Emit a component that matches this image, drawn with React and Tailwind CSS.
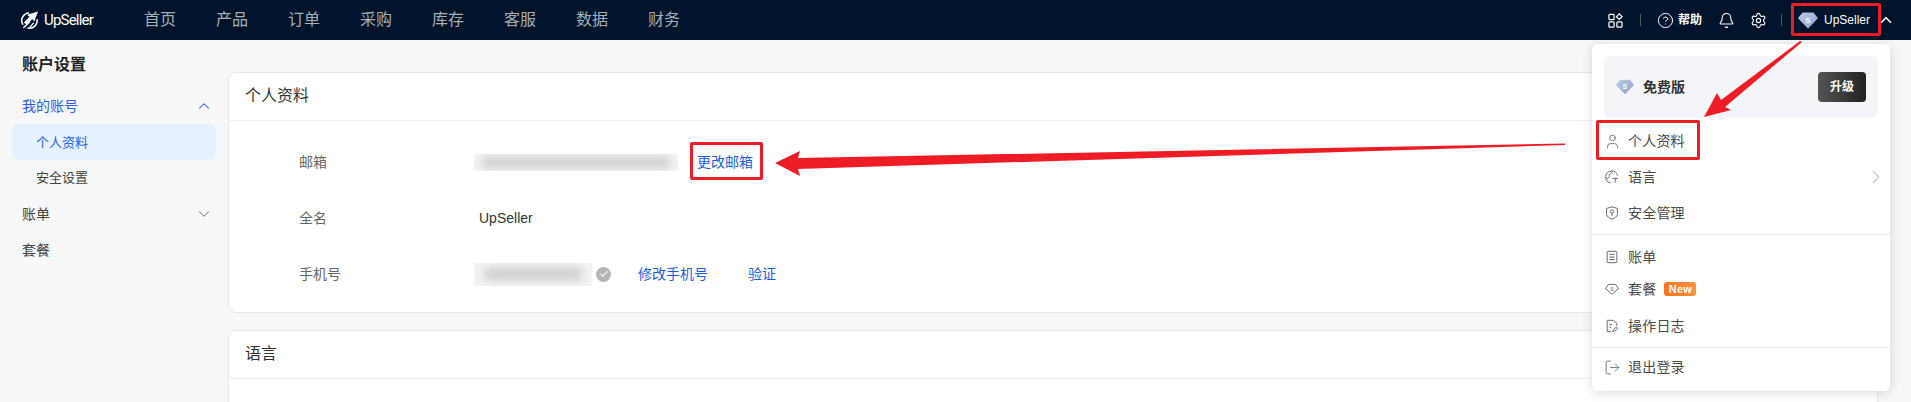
import { Bell, Check, ChevronDown, ChevronRight, ChevronUp, CircleHelp, LogOut, Settings, User } from "lucide-react";

const navItems = ["首页", "产品", "订单", "采购", "库存", "客服", "数据", "财务"];

function Diamond({ className }) {
    return (
        <svg viewBox="0 0 20 17" className={className}>
            <defs>
                <linearGradient id="gem" x1="0" y1="0" x2="1" y2="1">
                    <stop offset="0" stopColor="#b9cbe8" />
                    <stop offset="1" stopColor="#8da3cb" />
                </linearGradient>
            </defs>
            <path d="M5 0.5h10a1 1 0 0 1 .8.4L19.500 5.500a1 1 0 0 1 0 1.300L10.700 16a1 1 0 0 1-1.400 0L.5 6.800a1 1 0 0 1 0-1.300L4.200.9A1 1 0 0 1 5 .5z" fill="url(#gem)" />
            <text x="10" y="10.500" textAnchor="middle" fontSize="8" fontWeight="700" fill="#fff" fontFamily="Liberation Sans">S</text>
        </svg>
    );
}

function GridIcon() {
    return (
        <svg viewBox="0 0 16 16" className="w-[15px] h-[15px]" fill="none" stroke="#fff" strokeWidth="1.3">
            <rect x="1" y="1.500" width="5.500" height="5.500" rx="1" />
            <path d="M12 0.900l3 3-3 3-3-3z" />
            <rect x="1" y="9.500" width="5.500" height="5.500" rx="1" />
            <rect x="9.500" y="9.500" width="5.500" height="5.500" rx="1" />
        </svg>
    );
}

function Logo() {
    return (
        <svg viewBox="0 0 20 20" className="w-[19px] h-[19px]" fill="none" stroke="#fff">
            <path d="M9.500 2A8 8 0 0 0 3.200 14.500" strokeWidth="1.600" />
            <path d="M17.900 8.500A8 8 0 0 1 8 17.800" strokeWidth="1.600" />
            <path d="M19 0.500L7.500 4l2.500 2-6 6 3 2.500 6-6 2 2.500z" fill="#fff" stroke="none" />
            <path d="M3.500 18l7-7M10 17.500l4.500-5" strokeWidth="1.500" />
        </svg>
    );
}

function PaletteIcon() {
    return (
        <svg viewBox="0 0 16 16" className="w-[14px] h-[14px]" fill="none" stroke="#666" strokeWidth="1.100">
            <path d="M14.300 6.500A6.800 6.800 0 1 0 6.500 14.700" />
            <path d="M1.800 10c2.700-.8 3.400-2.200 3.200-4S8 3.500 8.800 1.300" />
            <path d="M8.500 9.500h6.500M11.700 9.500V14.500" />
        </svg>
    );
}

function ShieldIcon() {
    return (
        <svg viewBox="0 0 16 16" className="w-[14px] h-[14px]" fill="none" stroke="#666" strokeWidth="1.100">
            <path d="M8 1l6.200 1.800V9c0 3-3.200 5-6.200 6-3-1-6.200-3-6.200-6V2.800z" />
            <circle cx="8" cy="6.300" r="1.900" />
            <path d="M8 8.200V11.500" />
        </svg>
    );
}

function BillIcon() {
    return (
        <svg viewBox="0 0 16 16" className="w-[14px] h-[14px]" fill="none" stroke="#666" strokeWidth="1.100">
            <rect x="2.500" y="1.500" width="11" height="13" rx="1" />
            <path d="M5 5h6M5 8h6M5 11h6" />
        </svg>
    );
}

function GemIcon() {
    return (
        <svg viewBox="0 0 16 16" className="w-[14px] h-[14px]" fill="none" stroke="#666" strokeWidth="1.100">
            <path d="M4 2.800h8l3.500 4.700L8 14 .5 7.500z" />
            <text x="8" y="9.800" textAnchor="middle" fontSize="6.500" fill="#666" stroke="none" fontFamily="Liberation Sans">S</text>
        </svg>
    );
}

function LogIcon() {
    return (
        <svg viewBox="0 0 16 16" className="w-[14px] h-[14px]" fill="none" stroke="#666" strokeWidth="1.100">
            <path d="M7 14.500H2.500V1.500h7l4 3.500v3" />
            <path d="M5 6.500h3M5 9.500h2" />
            <path d="M9 14.500l.5-2 3.500-3.500 1.500 1.500-3.500 3.500z" />
        </svg>
    );
}

function MenuRow({ icon, label, extra, className = "" }) {
    return (
        <div className={`flex items-center h-9 pl-[13px] pr-[8px] text-[14px] text-[#4a4a4a] tracking-[0.2px] ${className}`}>
            <span className="w-[14px] h-[14px] shrink-0 flex items-center justify-center">{icon}</span>
            <span className="ml-[9px]">{label}</span>
            {extra}
        </div>
    );
}

function Card({ title, children, className = "" }) {
    return (
        <div className={`bg-white border border-[#e6e8eb] rounded-lg ${className}`}>
            <div className="h-[48px] flex items-center pl-4 pb-px text-[16px] text-[#333] border-b border-[#eceef0]">{title}</div>
            {children}
        </div>
    );
}

function BlurBox({ className, barClass }) {
    return (
        <div className={`bg-[#f3f3f3] overflow-hidden flex items-center justify-center -ml-[5px] ${className}`}>
            <div className={`bg-[#d2d2d2] blur-[4px] rounded-full ${barClass}`} />
        </div>
    );
}

function InfoRow({ label, children }) {
    return (
        <div className="h-[56px] flex items-center text-[14px]">
            <div className="w-[180px] text-[#666]">{label}</div>
            {children}
        </div>
    );
}

export default function App() {
    return (
        <div className="relative h-[402px] overflow-hidden bg-[#f6f7f9] font-['Liberation_Sans','Noto_Sans_CJK_SC',sans-serif]">
            <header className="h-[40px] bg-[#00152b] flex items-center text-white">
                <div className="w-[144px] pl-5 flex items-center">
                    <Logo />
                    <span className="ml-[5px] font-['Roboto',sans-serif] text-[15px] tracking-[-0.8px]">UpSeller</span>
                </div>
                <nav className="flex gap-10">
                    {navItems.map((item) => (
                        <span key={item} className="text-[16px] text-[#a8afb8] w-8">{item}</span>
                    ))}
                </nav>
                <div className="ml-auto flex items-center pr-5">
                    <GridIcon />
                    <div className="w-px h-3 bg-[#4a5868] ml-[17px]" />
                    <CircleHelp className="w-[17px] h-[17px] ml-4" strokeWidth={1.4} />
                    <span className="ml-[4px] text-[12px] font-bold">帮助</span>
                    <Bell className="w-[17px] h-[17px] ml-4" strokeWidth={1.5} />
                    <Settings className="w-[17px] h-[17px] ml-[15px]" strokeWidth={1.6} />
                    <div className="w-px h-3 bg-[#4a5868] ml-[14px]" />
                    <Diamond className="w-[20px] h-[17px] ml-4" />
                    <span className="ml-[6px] text-[12px] font-medium">UpSeller</span>
                    <ChevronUp className="w-[18px] h-[18px] ml-[7px] -mr-[4px]" strokeWidth={2.2} />
                </div>
            </header>

            <div className="flex">
                <aside className="w-[228px] shrink-0 pt-[13px]">
                    <h1 className="pl-[22px] text-[16px] leading-6 font-bold text-[#222]">账户设置</h1>
                    <div className="mt-[11px] h-9 flex items-center justify-between pl-[22px] pr-[15px] text-[14px] text-[#2563eb]">
                        我的账号
                        <ChevronUp className="w-[18px] h-[18px]" strokeWidth={1.4} />
                    </div>
                    <div className="mx-3 h-9 flex items-center pl-6 pt-px rounded-md bg-[#e6f1fe] text-[13px] text-[#2563eb]">个人资料</div>
                    <div className="h-9 flex items-center pl-9 text-[13px] text-[#444]">安全设置</div>
                    <div className="h-9 flex items-center justify-between pl-[22px] pr-[15px] text-[14px] text-[#444]">
                        账单
                        <ChevronDown className="w-[18px] h-[18px] text-[#888]" strokeWidth={1.4} />
                    </div>
                    <div className="h-9 flex items-center pl-[22px] text-[14px] text-[#444]">套餐</div>
                </aside>

                <main className="flex-1 pt-8 pr-[33px]">
                    <Card title="个人资料">
                        <div className="pt-[13px] pb-[10px] pl-[70px]">
                            <InfoRow label="邮箱">
                                <BlurBox className="w-[204px] h-[17px]" barClass="w-[190px] h-[13px]" />
                                <span className="ml-[19px] text-[#1a5fe0]">更改邮箱</span>
                            </InfoRow>
                            <InfoRow label="全名">
                                <span className="text-[#333]">UpSeller</span>
                            </InfoRow>
                            <InfoRow label="手机号">
                                <BlurBox className="w-[118px] h-[23px]" barClass="w-[100px] h-[14px]" />
                                <span className="ml-[4px] w-[15px] h-[15px] rounded-full bg-[#b5b5b5] flex items-center justify-center">
                                    <Check className="w-[10px] h-[10px] text-white" strokeWidth={2.5} />
                                </span>
                                <span className="ml-[27px] text-[#1a5fe0]">修改手机号</span>
                                <span className="ml-10 text-[#1a5fe0]">验证</span>
                            </InfoRow>
                        </div>
                    </Card>
                    <Card title="语言" className="mt-[17px] h-[200px]" />
                </main>
            </div>

            {/* user dropdown */}
            <div className="absolute left-[1592px] top-[44px] w-[298px] h-[347px] bg-white rounded-md shadow-[0_2px_12px_rgba(0,0,0,0.14)] pt-3">
                <div className="mx-3 h-[62px] rounded-md bg-[#f4f5fa] flex items-center pl-3 pr-3">
                    <Diamond className="w-[18px] h-[16px]" />
                    <span className="ml-[9px] text-[14px] font-bold text-[#333]">免费版</span>
                    <button className="ml-auto w-[48px] h-[30px] rounded bg-gradient-to-r from-[#555] to-[#222] text-white text-[12px] font-bold">升级</button>
                </div>
                <MenuRow className="mt-[5px]" icon={<User className="w-[17px] h-[17px] shrink-0 text-[#666]" strokeWidth={1.2} />} label="个人资料" />
                <MenuRow
                    icon={<PaletteIcon />}
                    label="语言"
                    extra={<ChevronRight className="ml-auto -mr-[5px] w-[22px] h-[22px] text-[#999]" strokeWidth={1} />}
                />
                <MenuRow icon={<ShieldIcon />} label="安全管理" />
                <div className="mt-[3px] border-t border-[#eceef0]" />
                <MenuRow className="mt-1" icon={<BillIcon />} label="账单" />
                <MenuRow
                    className="-mt-1"
                    icon={<GemIcon />}
                    label="套餐"
                    extra={
                        <span className="ml-2 w-[32px] h-[14px] rounded-[3px] bg-gradient-to-r from-[#f97316] to-[#fb923c] text-white text-[11px] leading-[14px] font-bold text-center">New</span>
                    }
                />
                <MenuRow className="mt-px" icon={<LogIcon />} label="操作日志" />
                <div className="mt-[3px] border-t border-[#eceef0]" />
                <MenuRow className="mt-px" icon={<LogOut className="w-[17px] h-[17px] shrink-0 text-[#666]" strokeWidth={1.2} />} label="退出登录" />
            </div>

            {/* red annotations on top of the page */}
            <div className="absolute left-[1791px] top-[3px] w-[90px] h-[33px] border-[3px] border-[#ee1c25] rounded-[2px]" />
            <div className="absolute left-[1596px] top-[120px] w-[104px] h-[40px] border-[3px] border-[#ee1c25] rounded-[2px]" />
            <div className="absolute left-[690px] top-[142px] w-[73px] h-[38px] border-[3px] border-[#ee1c25] rounded-[2px]" />
            <svg className="absolute left-0 top-0 w-[1911px] h-[402px] pointer-events-none" viewBox="0 0 1911 402">
                <polygon points="775,163 800,151 798,158 1565,143.5 1565,145 798,169 800,176" fill="#ee1c25" />
                <polygon points="1704,117 1717,93 1721,100 1800,41 1802,42 1725,107 1731,110" fill="#ee1c25" />
            </svg>
        </div>
    );
}
